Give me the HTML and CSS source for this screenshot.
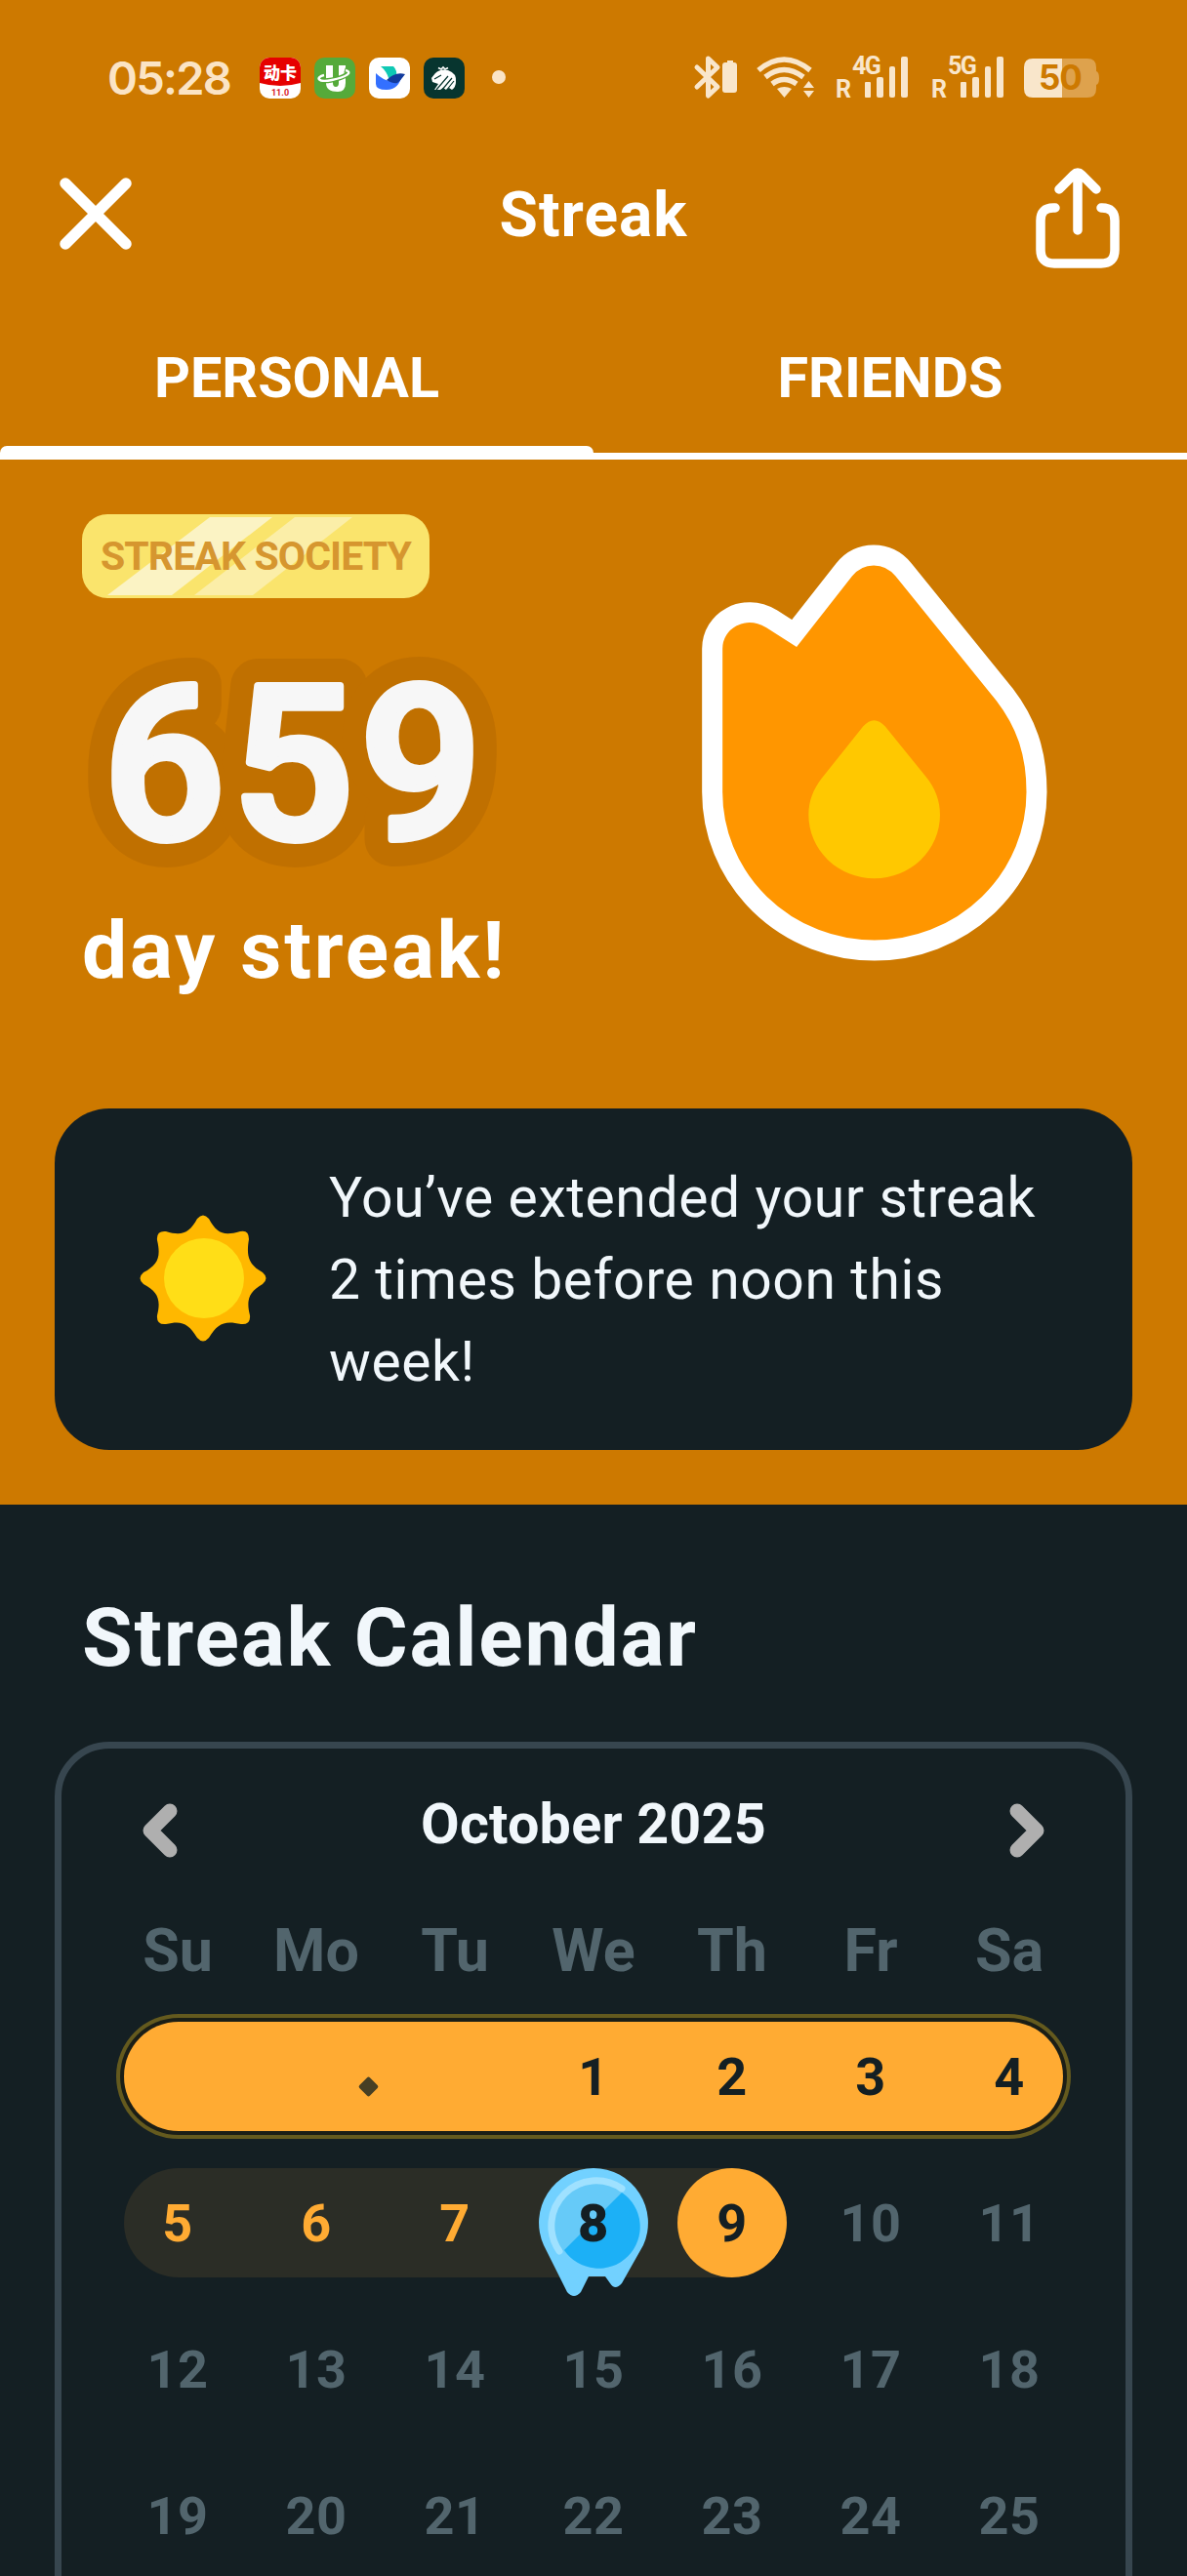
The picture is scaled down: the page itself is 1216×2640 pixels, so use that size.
FILE: index.html
```html
<!DOCTYPE html>
<html lang="en">

<head>
    <meta charset="UTF-8">
    <meta name="viewport" content="width=device-width, initial-scale=1.0">
    <title>Streak</title>
    <link rel="stylesheet" href="styles.css">
</head>

<body>
    <div class="screen">
        <div class="top">
            <div class="status-bar">
                <span class="clock">05:28</span>
                <div class="app-icons">
                    <svg width="42" height="42" viewBox="0 0 42 42">
                        <rect width="42" height="42" rx="10" fill="#fff" />
                        <path d="M0 26V10A10 10 0 0 1 10 0H32A10 10 0 0 1 42 10V26Q21 32 0 26Z" fill="#e60000" />
                        <text class="badge-cn" x="21" y="22" text-anchor="middle">动卡</text>
                        <text class="badge-num" x="21" y="39" text-anchor="middle">11.0</text>
                    </svg>
                    <svg width="42" height="42" viewBox="0 0 42 42">
                        <rect width="42" height="42" rx="10" fill="#55aa3a" />
                        <path d="M12 8H19V26Q19 30 22 30Q25 30 25 26V8H32V26Q32 35 24 35Q12 35 12 26Z" fill="#fff" />
                        <path d="M10 18C1 20 3 26 18 23C33 20 38 15 31 13" fill="none" stroke="#55aa3a" stroke-width="5" />
                        <path d="M10 18C1 20 3 26 18 23C33 20 40 15 32 13" fill="none" stroke="#fff" stroke-width="2.4" />
                    </svg>
                    <svg width="42" height="42" viewBox="0 0 42 42">
                        <rect width="42" height="42" rx="10" fill="#fff" />
                        <path d="M12 9H25Q29 13 28 19L20 21Q18 14 12 9Z" fill="#0fc9b4" />
                        <path d="M7 16Q14 23 22 24Q28 25 34 17Q31 33 18 33Q7 33 7 27Z" fill="#3370ff" />
                        <path d="M18 23Q27 14 37 17Q32 24 29 26Q25 27 18 23Z" fill="#123b9d" />
                    </svg>
                    <svg width="42" height="42" viewBox="0 0 42 42">
                        <rect width="42" height="42" rx="10" fill="#07352f" />
                        <path d="M8 21L12 16Q17 11 25 13Q34 16 33 25Q33 30 29 33L26 31L23 33L20 31L17 33H11L15 27L9 25Z" fill="#fff" />
                        <path d="M13 33L25 19M18 34L29 21M23 34L31 24M11 22L18 18" stroke="#07352f" stroke-width="1.2" />
                        <path d="M15 10.500L18 12L20 10L22 12L25 10.500" stroke="#fff" stroke-width="1.600" fill="none" />
                    </svg>
                </div>
                <span class="dot"></span>
                <svg class="status-icons" width="420" height="56" viewBox="710 51 420 56">
                    <g fill="none" stroke="#f9e6cb" stroke-linecap="round" stroke-linejoin="round" stroke-width="5">
                        <path d="M714 69L735 89L725.500 98V60L735 69L714 89" />
                        <path d="M777 72Q803 50 830 72" stroke-width="5.500" stroke-linecap="butt" />
                        <path d="M784 79Q803 64 823 79" stroke-width="5.500" stroke-linecap="butt" />
                        <path d="M791 86Q803 77 816 86" stroke-width="5.500" stroke-linecap="butt" />
                    </g>
                    <g fill="#f9e6cb">
                        <path d="M743 64H745V62H751V64H752Q755 64 755 67V92Q755 95 752 95H743Q740 95 740 92V67Q740 64 743 64Z" />
                        <path d="M796 91Q803.500 87 811 91L803.500 100Z" />
                        <path d="M823 90L828.500 83L834 90ZM823 93H834L828.500 100Z" />
                        <rect x="886" y="84" width="6" height="16" rx="1" />
                        <rect x="898" y="79" width="7" height="21" rx="2" />
                        <rect x="911" y="68" width="6" height="32" rx="2" />
                        <rect x="923" y="58" width="7" height="42" rx="2" />
                        <rect x="984" y="84" width="6" height="16" rx="1" />
                        <rect x="996" y="79" width="7" height="21" rx="2" />
                        <rect x="1009" y="68" width="6" height="32" rx="2" />
                        <rect x="1021" y="58" width="7" height="42" rx="2" />
                        <path d="M1058 60H1088V100H1058Q1049 100 1049 91V69Q1049 60 1058 60Z" />
                        <path d="M1088 60H1114Q1123 60 1123 69V73Q1126 74 1126 80T1123 87V91Q1123 100 1114 100H1088Z" opacity=".38" />
                    </g>
                    <g class="net-label">
                        <text x="856" y="100">R</text>
                        <text x="873" y="76">4G</text>
                        <text x="954" y="100">R</text>
                        <text x="971" y="76">5G</text>
                    </g>
                    <text class="battery-num" x="1064" y="92">50</text>
                </svg>
            </div>

            <div class="header">
                <svg width="76" height="76" viewBox="0 0 76 76">
                    <path d="M7 7L69 69M69 7L7 69" stroke="#fff" stroke-width="11.500" stroke-linecap="round" />
                </svg>
                <h1>Streak</h1>
                <svg width="86" height="104" viewBox="0 0 86 104">
                    <g fill="none" stroke="#fff" stroke-width="9.500" stroke-linecap="round" stroke-linejoin="round">
                        <path d="M20 41H18Q5 41 5 54V84Q5 98 19 98H67Q81 98 81 84V54Q81 41 68 41H67" />
                        <path d="M43 64V9M24 22L39 7Q43 3 47 7L62 22" />
                    </g>
                </svg>
            </div>

            <div class="tabs">
                <div class="tab active">PERSONAL</div>
                <div class="tab">FRIENDS</div>
            </div>

            <div class="hero">
                <div class="hero-text">
                    <div class="society">
                        <svg width="356" height="86" viewBox="0 0 356 86">
                            <path d="M131 3H195L92 83H26Z" fill="#fbf3c4" />
                            <path d="M218 3H277L175 83H115Z" fill="#fbeea8" />
                        </svg>
                        <span>STREAK SOCIETY</span>
                    </div>
                    <svg class="count" width="460" height="320" viewBox="0 0 460 320">
                        <text class="count-halo" x="22" y="246">659</text>
                        <text class="count-num" x="22" y="246">659</text>
                    </svg>
                    <div class="count-label">day streak!</div>
                </div>
                <svg class="flame" width="420" height="480" viewBox="0 0 1260 1440">
                    <path d="M119 405V845A498.500 487 0 0 0 1116 845C1116 720 1082 630 1017 545L707 162C658 102 572 102 524 162L371 357L300 312C215 262 119 318 119 405Z" fill="#ff9600" stroke="#fff" stroke-width="63" stroke-miterlimit="10" />
                    <path d="M583 643Q616 606 650 643L775 797C805 833 819 873 819 915A202 196 0 0 1 415 915C415 873 429 837 455 803Z" fill="#ffc800" />
                </svg>
            </div>

            <div class="message">
                <svg width="130" height="130" viewBox="-65 -65 130 130">
                    <path d="M-6 -61Q0 -68 6 -61C14 -46 21 -43 38 -48Q47 -50 47 -40C44 -22 47 -14 61 -6Q68 0 61 6C47 14 44 22 48 38Q49 48 39 47C22 43 15 46 6 61Q0 68 -6 61C-15 46 -22 43 -38 47Q-48 48 -47 38C-43 22 -46 14 -61 6Q-68 0 -61 -6C-46 -14 -43 -22 -47 -39Q-48 -49 -38 -48C-22 -43 -14 -46 -6 -61Z" fill="#ffb800" />
                    <circle r="41" cx="1" fill="#ffde17" />
                </svg>
                <p>You’ve extended your streak<br>2 times before noon this<br>week!</p>
            </div>
        </div>

        <div class="calendar-section">
            <h2>Streak Calendar</h2>
            <div class="calendar">
                <div class="month">
                    <svg width="36" height="56" viewBox="0 0 36 56">
                        <path d="M28 8L8 28L28 48" />
                    </svg>
                    <h3>October 2025</h3>
                    <svg width="36" height="56" viewBox="0 0 36 56">
                        <path d="M8 8L28 28L8 48" />
                    </svg>
                </div>
                <div class="weekdays">
                    <span>Su</span><span>Mo</span><span>Tu</span><span>We</span><span>Th</span><span>Fr</span><span>Sa</span>
                </div>
                <div class="week perfect">
                    <span></span><span><i class="spark"></i></span><span></span><span>1</span><span>2</span><span>3</span><span>4</span>
                </div>
                <div class="week current">
                    <span>5</span><span>6</span><span>7</span>
                    <span class="frozen">
                        <svg width="112" height="132" viewBox="0 0 112 132">
                            <path d="M56 0A56 56 0 0 1 107 79L85 118Q78 126 73 118L68 111H51L43 127Q36 135 29 127L5 79A56 56 0 0 1 56 0Z" fill="#72d1ff" />
                            <circle cx="56" cy="56" r="42.500" fill="#66caf8" />
                            <path d="M85 25A42.500 42.500 0 1 1 26 84Z" fill="#1cb0f6" />
                            <path d="M85 21A46 46 0 0 0 21 85" fill="none" stroke="#9fe1ff" stroke-width="7" stroke-linecap="round" />
                        </svg>
                        <b>8</b>
                    </span>
                    <span class="today">9</span><span class="next">10</span><span class="next">11</span>
                </div>
                <div class="week">
                    <span>12</span><span>13</span><span>14</span><span>15</span><span>16</span><span>17</span><span>18</span>
                </div>
                <div class="week">
                    <span>19</span><span>20</span><span>21</span><span>22</span><span>23</span><span>24</span><span>25</span>
                </div>
            </div>
        </div>
    </div>
</body>

</html>
```
FILE: styles.css
```css
* {
    box-sizing: border-box;
}

body {
    font-family: Roboto, "Liberation Sans", sans-serif;
    margin: 0;
    background-color: #141f23;
    color: #fff;
}

h1,
h2,
h3,
p {
    margin: 0;
}

svg {
    display: block;
    flex-shrink: 0;
}

.screen {
    width: 1216px;
    height: 2640px;
    overflow: hidden;
}

.top {
    height: 1542px;
    background-color: #cd7900;
}

/* status bar */
.status-bar {
    display: flex;
    align-items: center;
    height: 158px;
    padding: 0 86px 0 110px;
}

.clock {
    width: 156px;
    font-family: Inter, sans-serif;
    font-size: 47px;
    font-weight: 600;
    letter-spacing: -1.8px;
    color: #fbe4c5;
}

.app-icons {
    display: flex;
    gap: 14px;
    margin-top: 2px;
}

.badge-cn {
    font-family: "Noto Sans CJK SC", sans-serif;
    font-size: 17px;
    font-weight: 900;
    fill: #fff;
}

.badge-num {
    font-size: 9px;
    font-weight: 700;
    fill: #d8232a;
}

.dot {
    width: 14px;
    height: 14px;
    margin-left: 28px;
    border-radius: 50%;
    background-color: #fbe4c5;
}

.status-icons {
    margin-left: auto;
}

.net-label {
    font-size: 25px;
    font-weight: 700;
    letter-spacing: -1.5px;
    fill: #f9e6cb;
}

.battery-num {
    font-family: Inter, sans-serif;
    font-size: 35px;
    font-weight: 700;
    letter-spacing: -1px;
    fill: #cd7900;
}

/* header */
.header {
    display: grid;
    grid-template-columns: 1fr auto 1fr;
    align-items: center;
    height: 122px;
    padding: 0 69px 0 60px;
}

.header h1 {
    padding: 3px 0 0 9px;
    font-size: 64px;
    line-height: 64px;
    letter-spacing: 1px;
}

.header svg:last-child {
    margin-top: 9px;
    justify-self: end;
}

.tabs {
    display: flex;
    height: 191px;
    border-bottom: 7px solid #fff;
}

.tab {
    position: relative;
    flex: 1;
    padding-top: 78px;
    text-align: center;
    font-size: 57.5px;
    font-weight: 700;
    line-height: 60px;
}

.tab.active::after {
    content: "";
    position: absolute;
    left: 0;
    right: 0;
    bottom: -7px;
    height: 14px;
    border-radius: 7px 7px 0 0;
    background-color: #fff;
}

/* streak count */
.hero {
    display: flex;
    height: 665px;
    padding: 56px 0 0 84px;
}

.hero-text {
    width: 606px;
}

.society {
    position: relative;
    width: 356px;
    height: 86px;
    border-radius: 26px;
    overflow: hidden;
    background-color: #fae46c;
}

.society span {
    position: absolute;
    left: 0;
    top: 0;
    width: 100%;
    text-align: center;
    font-size: 41px;
    font-weight: 700;
    line-height: 86px;
    letter-spacing: -0.9px;
    white-space: nowrap;
    color: #d6962f;
}

.count text {
    font-size: 219px;
    font-weight: 500;
    letter-spacing: 7px;
    stroke-linejoin: round;
}

.count-halo {
    fill: #c07000;
    stroke: #c07000;
    stroke-width: 56px;
}

.count-num {
    fill: #f7f7f7;
    stroke: #f7f7f7;
    stroke-width: 8px;
}

.count-label {
    font-size: 82px;
    font-weight: 700;
    line-height: 82px;
    letter-spacing: 2.8px;
}

.flame {
    margin-top: 3px;
}

.message {
    display: flex;
    align-items: center;
    height: 350px;
    margin: 0 56px;
    padding-left: 87px;
    border-radius: 56px;
    background-color: #141f23;
}

.message svg {
    margin-bottom: 3px;
}

.message p {
    margin: 2px 0 0 64px;
    font-size: 57px;
    line-height: 84px;
    letter-spacing: 0.6px;
    white-space: nowrap;
    color: #f1f7fb;
}

/* calendar */
.calendar-section {
    padding: 95px 56px 0;
    color: #f1f7fb;
}

.calendar-section h2 {
    padding-left: 28px;
    font-size: 84px;
    line-height: 84px;
    letter-spacing: 1.8px;
}

.calendar {
    height: 1000px;
    margin-top: 64px;
    padding: 47px 48px 0;
    border: 7px solid #37464f;
    border-radius: 56px;
}

.month {
    display: flex;
    align-items: center;
    justify-content: space-between;
    height: 60px;
    padding: 0 35px;
}

.month h3 {
    padding-top: 2px;
    font-size: 57.5px;
    line-height: 60px;
    letter-spacing: 0.2px;
}

.month svg {
    margin-top: 14px;
    fill: none;
    stroke: #afafaf;
    stroke-width: 15;
    stroke-linecap: round;
    stroke-linejoin: round;
}

.weekdays,
.week {
    display: grid;
    grid-template-columns: repeat(7, 142px);
    text-align: center;
    font-weight: 700;
    color: #52656d;
}

.weekdays {
    margin: 70px 0 43px;
    font-size: 61px;
    line-height: 60px;
}

.week {
    position: relative;
    height: 112px;
    margin-bottom: 38px;
    font-size: 54px;
    line-height: 113px;
    letter-spacing: 0.5px;
}

.week span {
    position: relative;
}

.perfect,
.current .today,
.frozen b {
    color: #141f23;
}

.perfect::before,
.current::before {
    content: "";
    position: absolute;
    left: 16px;
    right: 16px;
    height: 112px;
    border-radius: 56px;
    background-color: #ffab33;
}

.perfect::before {
    box-shadow: 0 0 0 4px #1b1e16, 0 0 0 8px #645a1e;
}

.current {
    color: #ffab33;
}

.current::before {
    right: 300px;
    background-color: #2b2d26;
}

.current .next {
    color: #52656d;
}

.spark {
    position: absolute;
    left: 117px;
    top: 59px;
    width: 15px;
    height: 15px;
    border-radius: 2px;
    background-color: #473f24;
    transform: rotate(45deg);
}

.today {
    width: 112px;
    height: 112px;
    margin: 0 auto;
    border-radius: 56px;
    background-color: #ffab33;
}

.frozen svg {
    position: absolute;
    left: 15px;
    top: 0;
}

.frozen b {
    position: relative;
}
```
